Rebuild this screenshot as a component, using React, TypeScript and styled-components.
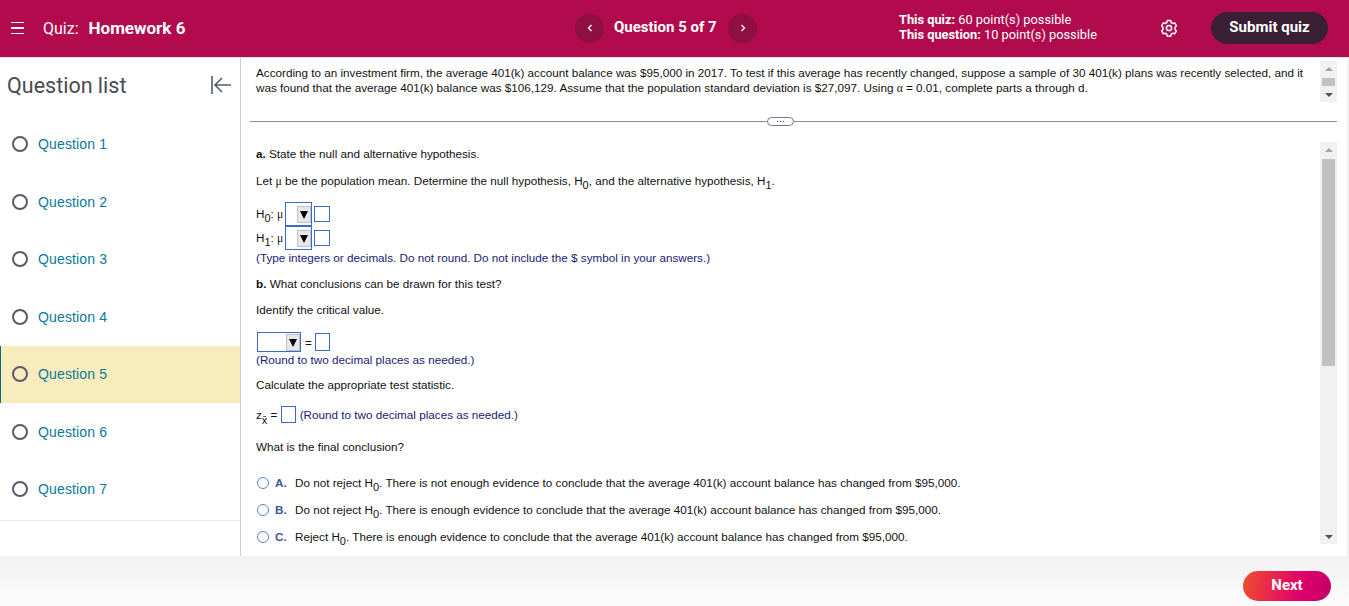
import React from "react";
import styled, { createGlobalStyle } from "styled-components";

const Global = createGlobalStyle`
  html, body { margin: 0; padding: 0; background: #fff; }
  body { font-family: "Liberation Sans", Arial, sans-serif; overflow: hidden; }
`;
const Page = styled.div`width: 1349px; height: 606px; display: flex; flex-direction: column; overflow: hidden;`;
const Header = styled.header`
  height: 56px; padding-bottom: 1px; flex: none; background: #b10b4d; color: #fff; display: flex; align-items: center; border-bottom: 1px solid #e6e6ea;
`;
const Menu = styled.div`width: 13px; margin-left: 11px; display: flex; flex-direction: column; gap: 4px;`;
const MenuBar = styled.span`height: 1.5px; background: #fff; display: block;`;
const QuizTitle = styled.div`margin-left: 19px; width: 532px; font-size: 16px; font-family: Roboto, sans-serif;`;
const QuizName = styled.b`font-weight: 700; margin-left: 10px; font-size: 17px;`;
const NavButton = styled.div`
  width: 29px; height: 29px; border-radius: 50%; background: #8f1040; color: #fff; display: flex; align-items: center; justify-content: center;
`;
const NavLabel = styled.div`font-size: 15px; font-weight: 700; width: 124px; padding: 0 0 2px 10px; box-sizing: border-box; font-family: Roboto, sans-serif; white-space: nowrap;`;
const Points = styled.div`margin: 0 0 3px 142px; width: 261px; font-size: 12.8px; line-height: 15px; font-family: Roboto, sans-serif;`;
const PointsLabel = styled.b`font-weight: 700;`;
const Gear = styled.div`width: 18px; height: 18px; margin-right: 33px; display: flex;`;
const Submit = styled.div`
  width: 117px; height: 32px; padding-bottom: 2px; box-sizing: border-box; border-radius: 16px; background: #3a1f35; color: #fff; font-size: 15px; font-weight: 700; display: flex; align-items: center; justify-content: center; font-family: Roboto, sans-serif;
`;
const Main = styled.main`flex: 1; min-height: 0; display: flex; border-right: 2px solid #f1f1f1;`;
const Side = styled.aside`width: 240px; flex: none; border-right: 1px solid #c5cedf; display: flex; flex-direction: column;`;
const SideHead = styled.div`height: 57.5px; flex: none; display: flex; align-items: center; justify-content: space-between; padding: 0 8px 3px 7px; box-sizing: border-box; color: #494c53;`;
const SideTitle = styled.div`font-size: 21.5px; font-family: Roboto, sans-serif; font-weight: 400;`;
const SideList = styled.div`border-bottom: 1px solid #e8e8ec; padding-bottom: 2px;`;
const Item = styled.div<{ $active?: boolean }>`
  height: 57.5px; display: flex; align-items: center; box-sizing: border-box; padding-left: 12px; gap: 10px;
  background: ${p => (p.$active ? "#f9ecbc" : "transparent")};
  box-shadow: ${p => (p.$active ? "inset 1px 0 0 #0b6a80" : "none")};
`;
const Circle = styled.span`width: 12px; height: 12px; border: 2px solid #565d69; border-radius: 50%; display: block;`;
const ItemLabel = styled.span`font-size: 14px; color: #087a9c; font-family: "Liberation Sans", sans-serif; letter-spacing: .15px;`;
const Content = styled.section`flex: 1; min-width: 0; padding: 0 10px 0 9px; display: flex; flex-direction: column;`;
const Stem = styled.div`height: 63px; flex: none; display: flex; justify-content: space-between;`;
const StemText = styled.div`width: 1064px; padding: 7px 0 0 6px; box-sizing: border-box; font-size: 11.7px; line-height: 15px; color: #111;`;
const StemBar = styled.div`width: 17px; margin-top: 3px; height: 41px; background: #f1f1f1; display: flex; flex-direction: column; align-items: center; justify-content: space-between; padding: 6px 0 5px; box-sizing: border-box;`;
const StemThumb = styled.div`width: 13px; height: 8px; background: #c1c1c1;`;
const Arrow = styled.div<{ $up?: boolean; $dark?: boolean }>`
  width: 0; height: 0; border-left: 4px solid transparent; border-right: 4px solid transparent;
  ${p => (p.$up ? `border-bottom: 4px solid ${p.$dark ? "#505050" : "#a3a3a3"};` : `border-top: 4px solid ${p.$dark ? "#505050" : "#a3a3a3"};`)}
`;
const Divider = styled.div`height: 1px; background: #8a9098; flex: none; display: flex; align-items: center; padding-left: 517px;`;
const Pill = styled.div`
  width: 27px; height: 9px; box-sizing: border-box; border: 1px solid #6b7a90; border-radius: 5px; background: #fff; display: flex; align-items: center; justify-content: center; gap: 2px;
`;
const Dot = styled.span`width: 1px; height: 1px; background: #444; display: block;`;
const Body = styled.div`flex: 1; min-height: 0; display: flex; justify-content: space-between; padding-top: 20px; margin-bottom: 12px;`;
const Scroll = styled.div`width: 1064px; flex: none; padding: 4px 0 0 6px; box-sizing: border-box; font-size: 11.7px; line-height: 15px; color: #111;`;
const Bar = styled.div`width: 17px; background: #f1f1f1; display: flex; flex-direction: column; align-items: center; padding: 6px 0 5px; box-sizing: border-box;`;
const Thumb = styled.div`width: 13px; height: 207px; background: #c1c1c1; margin-top: 7px; margin-bottom: auto;`;
const P = styled.div<{ $mt?: number; $navy?: boolean; $ml?: number }>`
  height: 15px;
  margin-top: ${p => p.$mt ?? 0}px;
  margin-left: ${p => p.$ml ?? 0}px;
  color: ${p => (p.$navy ? "#1b1b73" : "#111")};
  white-space: nowrap;
`;
const Sub = styled.sub<{ $drop?: number }>`font-size: 11px; line-height: 0; vertical-align: ${p => -(p.$drop ?? 4)}px;`;
const Mu = styled.span`font-family: "Liberation Serif", serif;`;
const FormulaRow = styled.div<{ $h: number; $mt?: number; $ml?: number }>`
  height: ${p => p.$h}px; margin: ${p => p.$mt ?? 0}px 0 0 ${p => p.$ml ?? 0}px; display: flex; align-items: center; white-space: nowrap;
`;
const Sym = styled.span`width: 29px; flex: none;`;
const SelectBox = styled.div<{ $w: number; $h: number }>`
  width: ${p => p.$w}px; height: ${p => p.$h}px; border: 1px solid #3a6cc6; box-sizing: border-box;
  margin-right: 2px; display: flex; justify-content: flex-end; align-items: center; padding: 1px 0 0; background: #fff;
`;
const SelectButton = styled.div`width: 14px; height: 17px; background: #e8e8e8; border: 1px solid #c2c2c2; box-sizing: border-box; display: flex; align-items: center; justify-content: center;`;
const Tri = styled.span`width: 0; height: 0; border-left: 4px solid transparent; border-right: 4px solid transparent; border-top: 8px solid #000;`;
const Input = styled.div<{ $h?: number; $w?: number }>`width: ${p => p.$w ?? 16}px; height: ${p => p.$h ?? 16}px; border: 1px solid #3a6cc6; box-sizing: border-box; background: #fff; flex: none;`;
const Eq = styled.span`margin: 0 3px 0 2px;`;
const Option = styled.div<{ $mt?: number }>`display: flex; align-items: center; height: 15px; margin-top: ${p => p.$mt ?? 0}px; white-space: nowrap;`;
const Radio = styled.span`width: 12px; height: 12px; border: 1.5px solid #5b82c9; border-radius: 50%; box-sizing: border-box; flex: none; margin: 0 6px 0 1px;`;
const OptLetter = styled.b`width: 20px; color: #3a5a94; flex: none;`;
const Footer = styled.footer`height: 50px; flex: none; background: linear-gradient(#f2f2f2, #fbfbfb); display: flex; justify-content: flex-end; align-items: flex-start; padding: 15px 18px 0 0; box-sizing: border-box;`;
const Next = styled.div`width: 88px; height: 30px; padding-bottom: 2px; box-sizing: border-box; border-radius: 15px; background: linear-gradient(100deg, #f04d30, #e0006a 65%, #c40068); color: #fff; font-weight: 700; font-size: 15px; display: flex; align-items: center; justify-content: center; font-family: Roboto, sans-serif;`;

const questions = [1, 2, 3, 4, 5, 6, 7];

const H = ({ n }: { n: number }) => <>H<Sub>{n}</Sub></>;

export default function App() {
  return (
    <Page>
      <Global />
      <Header>
        <Menu><MenuBar /><MenuBar /><MenuBar /></Menu>
        <QuizTitle>Quiz:<QuizName>Homework 6</QuizName></QuizTitle>
        <NavButton>
          <svg width="8" height="10" viewBox="0 0 8 10" fill="none" stroke="#fff" strokeWidth="1.3"><path d="M5.5 2 2.5 5l3 3" /></svg>
        </NavButton>
        <NavLabel>Question 5 of 7</NavLabel>
        <NavButton>
          <svg width="8" height="10" viewBox="0 0 8 10" fill="none" stroke="#fff" strokeWidth="1.3"><path d="M2.5 2l3 3-3 3" /></svg>
        </NavButton>
        <Points>
          <div><PointsLabel>This quiz:</PointsLabel> 60 point(s) possible</div>
          <div><PointsLabel>This question:</PointsLabel> 10 point(s) possible</div>
        </Points>
        <Gear>
          <svg width="18" height="18" viewBox="0 0 18 18" fill="none" stroke="#fff" strokeWidth="1.5" strokeLinejoin="round">
            <path d="M7.4 1.5h3.2l.6 2 1.7 1 2-.5 1.5 2.8-1.4 1.6v2l1.4 1.5-1.5 2.8-2-.5-1.7 1-.6 2H7.4l-.6-2-1.7-1-2 .5-1.5-2.8 1.4-1.5v-2L1.6 6.8l1.5-2.8 2 .5 1.7-1z" />
            <circle cx="9" cy="9" r="2.6" />
          </svg>
        </Gear>
        <Submit>Submit quiz</Submit>
      </Header>
      <Main>
        <Side>
          <SideHead>
            <SideTitle>Question list</SideTitle>
            <svg width="22" height="20" viewBox="0 0 22 20" fill="none" stroke="#565d69" strokeWidth="1.6"><path d="M2 1v18M21 10H5M12 3l-7 7 7 7" /></svg>
          </SideHead>
          <SideList>
            {questions.map(n => (
              <Item key={n} $active={n === 5}>
                <Circle />
                <ItemLabel>Question {n}</ItemLabel>
              </Item>
            ))}
          </SideList>
        </Side>
        <Content>
          <Stem>
            <StemText>
              According to an investment firm, the average 401(k) account balance was $95,000 in 2017. To test if this average has recently changed, suppose a sample of 30 401(k) plans was recently selected, and it was found that the average 401(k) balance was $106,129. Assume that the population standard deviation is $27,097. Using <Mu>α</Mu> = 0.01, complete parts a through d.
            </StemText>
            <StemBar>
              <Arrow $up />
              <StemThumb />
              <Arrow $dark />
            </StemBar>
          </Stem>
          <Divider>
            <Pill><Dot /><Dot /><Dot /></Pill>
          </Divider>
          <Body>
            <Scroll>
              <P><b>a.</b> State the null and alternative hypothesis.</P>
              <P $mt={12}>Let <Mu>μ</Mu> be the population mean. Determine the null hypothesis, <H n={0} />, and the alternative hypothesis, <H n={1} />.</P>
              <FormulaRow $h={24} $mt={14}>
                <Sym><H n={0} />: <Mu>μ</Mu></Sym>
                <SelectBox $w={27} $h={24}><SelectButton><Tri /></SelectButton></SelectBox>
                <Input />
              </FormulaRow>
              <FormulaRow $h={24}>
                <Sym><H n={1} />: <Mu>μ</Mu></Sym>
                <SelectBox $w={27} $h={24}><SelectButton><Tri /></SelectButton></SelectBox>
                <Input />
              </FormulaRow>
              <P $navy>(Type integers or decimals. Do not round. Do not include the $ symbol in your answers.)</P>
              <P $mt={11}><b>b.</b> What conclusions can be drawn for this test?</P>
              <P $mt={11}>Identify the critical value.</P>
              <FormulaRow $h={20} $mt={15} $ml={1}>
                <SelectBox $w={44} $h={20}><SelectButton><Tri /></SelectButton></SelectBox>
                <Eq>=</Eq>
                <Input $h={18} $w={15} />
              </FormulaRow>
              <P $navy>(Round to two decimal places as needed.)</P>
              <P $mt={10}>Calculate the appropriate test statistic.</P>
              <FormulaRow $h={17} $mt={14}>
                <span>z<Sub $drop={5}>x̄</Sub> =&nbsp;</span>
                <Input $h={17} $w={15} />
                <P $navy $ml={4}>(Round to two decimal places as needed.)</P>
              </FormulaRow>
              <P $mt={16}>What is the final conclusion?</P>
              <Option $mt={21}><Radio /><OptLetter>A.</OptLetter><span>Do not reject <H n={0} />. There is not enough evidence to conclude that the average 401(k) account balance has changed from $95,000.</span></Option>
              <Option $mt={12}><Radio /><OptLetter>B.</OptLetter><span>Do not reject <H n={0} />. There is enough evidence to conclude that the average 401(k) account balance has changed from $95,000.</span></Option>
              <Option $mt={12}><Radio /><OptLetter>C.</OptLetter><span>Reject <H n={0} />. There is enough evidence to conclude that the average 401(k) account balance has changed from $95,000.</span></Option>
            </Scroll>
            <Bar>
              <Arrow $up />
              <Thumb />
              <Arrow $dark />
            </Bar>
          </Body>
        </Content>
      </Main>
      <Footer><Next>Next</Next></Footer>
    </Page>
  );
}
